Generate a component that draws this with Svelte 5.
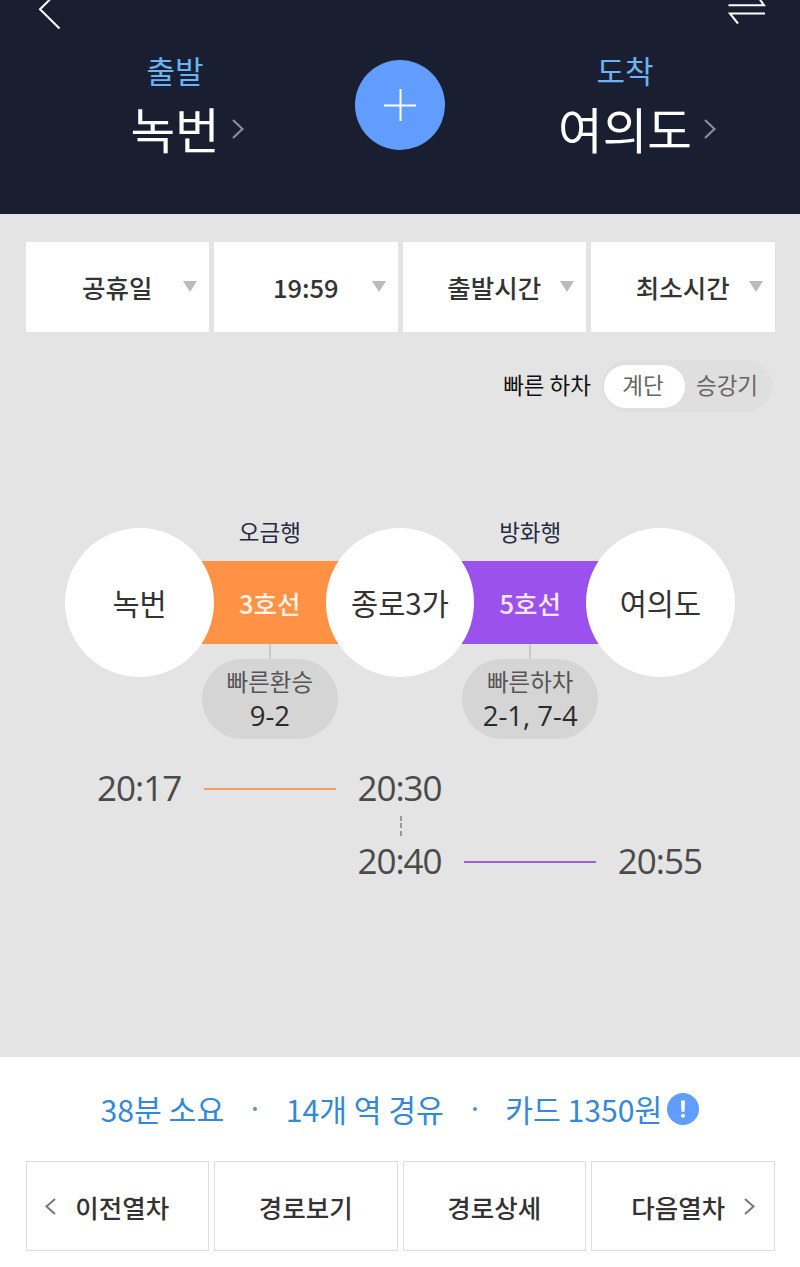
<script>
	let exitType = $state('계단');

	const ends = [
		{ label: '출발', station: '녹번' },
		{ label: '도착', station: '여의도' }
	];
	const filters = ['공휴일', '19:59', '출발시간', '최소시간'];
	const exitTypes = ['계단', '승강기'];
	const stations = ['녹번', '종로3가', '여의도'];
	const legs = [
		{ line: '3호선', kind: 'line3', bound: '오금행', tip: '빠른환승', door: '9-2' },
		{ line: '5호선', kind: 'line5', bound: '방화행', tip: '빠른하차', door: '2-1, 7-4' }
	];
</script>

{#snippet endpoint(end)}
	<div class="endpoint">
		<div class="label">{end.label}</div>
		<div class="name">
			<span>{end.station}</span>
			<svg width="12" height="20" viewBox="0 0 12 20"><path d="M1 1l9.5 9L1 19" /></svg>
		</div>
	</div>
{/snippet}

<div class="app">
	<header>
		<div class="topbar">
			<svg width="24" height="30" viewBox="0 0 24 30"><path d="M20.5 -9L2 9.3 21.5 28.5" /></svg>
			<svg width="38" height="30" viewBox="0 0 38 30">
				<path d="M28 -6L36 5.3H.5M37 13.6H2L10 23.5" />
			</svg>
		</div>
		<div class="ends">
			{@render endpoint(ends[0])}
			<button class="plus" aria-label="경유">
				<svg width="34" height="34" viewBox="0 0 34 34"><path d="M17.5 1v32M1 17.5h32" /></svg>
			</button>
			{@render endpoint(ends[1])}
		</div>
	</header>

	<main>
		<div class="filters">
			{#each filters as filter}
				<button>{filter}<i></i></button>
			{/each}
		</div>

		<div class="exit">
			<span>빠른 하차</span>
			<div class="toggle">
				{#each exitTypes as type}
					<button class:active={exitType === type} onclick={() => (exitType = type)}>{type}</button>
				{/each}
			</div>
		</div>

		<div class="route">
			{#each stations as station, i}
				<div class="station">{station}</div>
				{#if legs[i]}
					<div class="leg {legs[i].kind}">
						<div class="bound">{legs[i].bound}</div>
						<div class="band">{legs[i].line}</div>
						<div class="stem"></div>
						<div class="tip">
							<div>{legs[i].tip}</div>
							<strong>{legs[i].door}</strong>
						</div>
					</div>
				{/if}
			{/each}
		</div>

		<div class="times">
			<span>20:17</span>
			<hr class="line3" />
			<span>20:30</span>
			<div class="wait"></div>
			<span class="depart">20:40</span>
			<hr class="line5" />
			<span>20:55</span>
		</div>
	</main>

	<footer>
		<div class="summary">
			<span>38분 소요</span>
			<i class="dot"></i>
			<span>14개 역 경유</span>
			<i class="dot"></i>
			<span>카드 1350원</span>
			<svg width="32" height="32" viewBox="0 0 32 32">
				<circle cx="16" cy="16" r="16" fill="#609dff" />
				<path d="M14 7.5h4l-.5 11.2h-3z" fill="#fff" />
				<circle cx="16" cy="22.8" r="2" fill="#fff" />
			</svg>
		</div>
		<div class="actions">
			<button>
				<svg class="prev" width="11" height="17" viewBox="0 0 11 17"><path d="M10 1L1.5 8.5 10 16" /></svg>
				이전열차
			</button>
			<button>경로보기</button>
			<button>경로상세</button>
			<button>
				다음열차
				<svg class="next" width="11" height="17" viewBox="0 0 11 17"><path d="M1 1l8.5 7.5L1 16" /></svg>
			</button>
		</div>
	</footer>
</div>

<style>
	:global(body) {
		background: #fff;
	}
	.app {
		width: 800px;
		height: 1267px;
		overflow: hidden;
		display: flex;
		flex-direction: column;
		font-family: 'Noto Sans CJK KR', sans-serif;
		color: #333;
	}
	button {
		border: 0;
		padding: 0;
		background: none;
		font: inherit;
		color: inherit;
		cursor: pointer;
	}
	svg {
		fill: none;
		flex: none;
	}
	header {
		height: 214px;
		background: #191f31;
	}
	.topbar {
		height: 30px;
		padding: 0 34px 0 38px;
		display: flex;
		justify-content: space-between;
		stroke: #fff;
		stroke-width: 2;
	}
	.ends {
		display: grid;
		grid-template-columns: 350px 100px 350px;
		justify-items: center;
		padding-top: 20px;
	}
	.endpoint {
		text-align: center;
	}
	.label {
		font-size: 31px;
		line-height: 40px;
		color: #6cb3f4;
	}
	.name {
		display: flex;
		justify-content: center;
		align-items: center;
		gap: 12px;
		height: 78px;
		font-size: 48.5px;
		line-height: 76px;
		color: #fff;
	}
	.name span {
		padding-bottom: 2px;
	}
	.name svg {
		margin-right: -24px;
		stroke: #8d93a3;
		stroke-width: 2;
	}
	.plus {
		width: 90px;
		height: 90px;
		margin-top: 10px;
		border-radius: 50%;
		background: #609dff;
		display: flex;
		align-items: center;
		justify-content: center;
		stroke: #fff;
		stroke-width: 2;
	}
	main {
		height: 843px;
		background: #e4e4e4;
	}
	.filters {
		display: grid;
		grid-template-columns: repeat(4, 1fr);
		gap: 5px;
		padding: 28px 25.5px 0;
	}
	.filters button {
		position: relative;
		height: 90px;
		padding-bottom: 2px;
		background: #fff;
		font-size: 25.5px;
		font-weight: 500;
	}
	.filters i {
		position: absolute;
		right: 12px;
		top: 39px;
		border: 7.5px solid transparent;
		border-top: 11px solid #bbb;
		border-bottom: 0;
	}
	.exit {
		display: flex;
		justify-content: flex-end;
		align-items: center;
		gap: 11px;
		padding: 28px 28px 0 0;
		font-size: 22.5px;
		color: #111;
	}
	.exit span {
		padding-bottom: 4px;
	}
	.toggle {
		display: flex;
		align-items: center;
		box-sizing: border-box;
		width: 170px;
		height: 52px;
		padding: 0 2px;
		border-radius: 26px;
		background: #dfdfdf;
	}
	.toggle button {
		flex: 1;
		height: 43px;
		padding: 0 1px 4px 0;
		border-radius: 22px;
		font-size: 22.5px;
		line-height: 38px;
		color: #666;
	}
	.toggle .active {
		flex: 0 0 81px;
		box-sizing: border-box;
		padding-right: 3px;
		background: #fff;
	}
	.route {
		display: grid;
		grid-template-columns: repeat(5, 130.2px);
		justify-content: center;
		align-items: start;
		padding-top: 104px;
	}
	.station {
		z-index: 1;
		height: 149px;
		margin: 12px -9.4px 0;
		border-radius: 50%;
		background: #fff;
		font-size: 29.5px;
		line-height: 149px;
		text-align: center;
	}
	.leg {
		display: flex;
		flex-direction: column;
		text-align: center;
	}
	.bound {
		height: 44.5px;
		font-size: 22.5px;
		line-height: 30px;
		color: #252c44;
	}
	.band {
		height: 83px;
		margin: 0 -20px;
		font-size: 25.5px;
		font-weight: 500;
		line-height: 84px;
		color: #fff3e8;
	}
	.line3 .band {
		background: #ff9245;
	}
	.line5 .band {
		background: #9b51eb;
		color: #f8e8ff;
	}
	.stem {
		align-self: center;
		width: 2px;
		height: 15px;
		background: #cacaca;
	}
	.tip {
		box-sizing: border-box;
		height: 80px;
		margin: 0 -3px;
		padding-top: 6px;
		border-radius: 40px;
		background: #d5d5d5;
		font-size: 23.5px;
		line-height: 32px;
		color: #555;
	}
	.tip strong {
		display: block;
		font-family: 'Open Sans', sans-serif;
		font-size: 27.5px;
		font-weight: 400;
		line-height: 38px;
		color: #2b2b2b;
	}
	.times {
		display: grid;
		grid-template-columns: repeat(5, 130.2px);
		grid-template-rows: 50px 23px 50px;
		justify-content: center;
		align-items: center;
		padding-top: 25px;
		font-family: 'Open Sans', sans-serif;
		font-size: 35px;
		letter-spacing: -1px;
		color: #4a4a4a;
		text-align: center;
	}
	.times span {
		padding: 0 1px 2px 0;
	}
	.times hr {
		width: 132px;
		height: 2px;
		margin: 0 -1px;
		border: 0;
	}
	hr.line3 {
		background: #f09d63;
	}
	hr.line5 {
		background: #a35bdd;
	}
	.wait {
		grid-area: 2 / 3;
		justify-self: center;
		width: 2px;
		height: 20px;
		margin: 1px 0 0 1px;
		background: repeating-linear-gradient(#999 0 5px, transparent 5px 7.5px);
	}
	.depart {
		grid-column: 3;
	}
	footer {
		height: 210px;
		background: #fff;
	}
	.summary {
		display: flex;
		justify-content: center;
		align-items: center;
		height: 104px;
		font-size: 30.2px;
		line-height: 40px;
		color: #3289dc;
		white-space: nowrap;
	}
	.dot {
		width: 4px;
		height: 4px;
		margin: 0 28.5px 0 29px;
		border-radius: 50%;
		background: #5c91c5;
	}
	.summary span {
		padding-bottom: 1px;
	}
	.summary svg {
		margin-left: 5px;
	}
	.actions {
		display: grid;
		grid-template-columns: repeat(4, 1fr);
		gap: 5px;
		padding: 0 25.5px;
	}
	.actions button {
		display: flex;
		align-items: center;
		justify-content: center;
		height: 90px;
		border: 1px solid #dedede;
		font-size: 25.5px;
		font-weight: 500;
	}
	.actions svg {
		stroke: #777;
		stroke-width: 2;
	}
	.prev {
		margin: 0 19px 0 -20px;
	}
	.next {
		margin: 0 -21px 0 19px;
	}
</style>
